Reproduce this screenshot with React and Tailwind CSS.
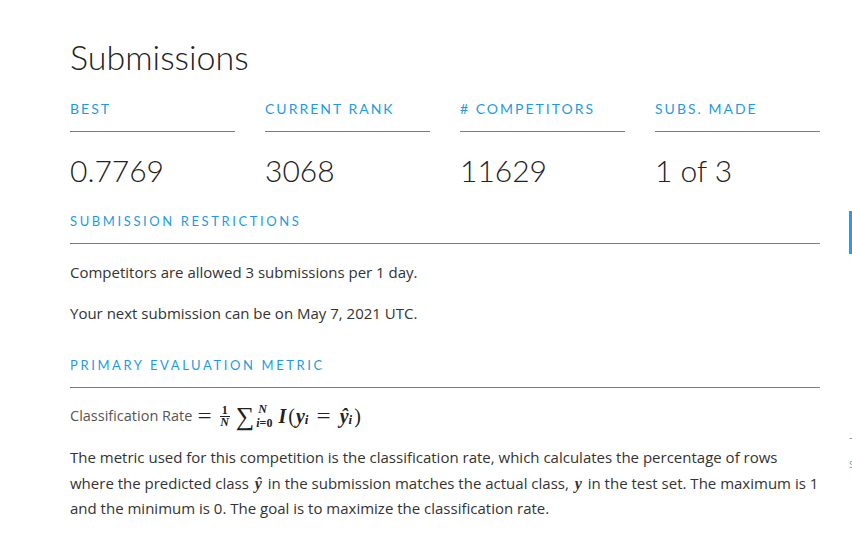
const stats = [
  { label: 'Best', value: '0.7769' },
  { label: 'Current Rank', value: '3068' },
  { label: '# Competitors', value: '11629' },
  { label: 'Subs. Made', value: '1 of 3' },
]

const headFont = { fontFamily: 'Lato, "Noto Sans", sans-serif' }
const mathFont = { fontFamily: '"Liberation Serif", "DejaVu Serif", serif' }

const SectionTitle = ({ children }) => (
  <div className="border-b border-[#1e9be0] pb-[14px]">
    <h3 className="text-[13px] leading-[16px] uppercase tracking-[2.6px] text-[#1e9be0]" style={headFont}>
      {children}
    </h3>
  </div>
)

// formula drawn with plain text, serif italic like the tex render
const Formula = () => (
  <span className="inline-flex items-center text-[20px] leading-[24px] text-[#222] ml-[7px]" style={mathFont}>
    <span className="mr-[7px] scale-x-125">=</span>
    <span className="inline-flex flex-col items-center text-[12px] leading-[11px] font-bold mx-[2px]">
      <span className="border-b border-[#222] px-[2px]">1</span>
      <span className="italic">N</span>
    </span>
    <span className="text-[26px] ml-[4px] mt-[2px]">&sum;</span>
    <span className="inline-flex flex-col text-[12px] leading-[14px] font-bold mr-[6px] ml-[2px] -mt-[1px]">
      <span className="italic ml-[2px]">N</span>
      <span><span className="italic">i</span>=0</span>
    </span>
    <span className="italic font-bold">I</span>
    <span className="ml-[2px]">(</span>
    <span className="italic font-bold ml-[1px]">y</span>
    <span className="italic text-[13px] mt-[8px] font-bold">i</span>
    <span className="mx-[10px] scale-x-125">=</span>
    <span className="italic font-bold">&#375;</span>
    <span className="italic text-[13px] mt-[8px] font-bold">i</span>
    <span className="ml-[2px]">)</span>
  </span>
)

const App = () => {
  return (
    <div className="w-[852px] h-[549px] overflow-hidden bg-white flex">
      <div className="w-[750px] ml-[70px] shrink-0 pt-[37px]">
        <h1 className="text-[34px] leading-[40px] font-light text-[#222]" style={headFont}>
          Submissions
        </h1>

        <div className="grid grid-cols-4 gap-[30px] mt-[19px]">
          {stats.map(s => (
            <div key={s.label}>
              <div className="border-b border-[#1e9be0] pb-[11px]">
                <span className="text-[14px] leading-[17px] uppercase tracking-[2px] text-[#1e9be0]" style={headFont}>
                  {s.label}
                </span>
              </div>
              <p className="text-[30px] leading-[36px] font-light text-[#222] mt-[20px]" style={headFont}>
                {s.value}
              </p>
            </div>
          ))}
        </div>

        <div className="mt-[25px]">
          <SectionTitle>Submission Restrictions</SectionTitle>
        </div>

        <div className="text-[15px] leading-[25px] text-[#333]" style={{ fontFamily: '"Open Sans", sans-serif' }}>
          <p className="mt-[16px]">Competitors are allowed 3 submissions per 1 day.</p>
          <p className="mt-[16px]">Your next submission can be on May 7, 2021 UTC.</p>
        </div>

        <div className="mt-[31px]">
          <SectionTitle>Primary Evaluation Metric</SectionTitle>
        </div>

        <div className="mt-[12px] flex items-center text-[14.5px] text-[#555]" style={{ fontFamily: '"Open Sans", sans-serif' }}>
          Classification Rate <Formula />
        </div>

        <p className="mt-[13px] text-[15px] leading-[25.5px] text-[#333]" style={{ fontFamily: '"Open Sans", sans-serif' }}>
          The metric used for this competition is the classification rate, which calculates the percentage of rows
          where the predicted class <span className="italic font-bold text-[16px] px-[2px]" style={mathFont}>&#375;</span> in the submission matches the actual class, <span className="italic font-bold text-[16px] px-[2px]" style={mathFont}>y</span> in the test set. The maximum is 1
          and the minimum is 0. The goal is to maximize the classification rate.
        </p>
      </div>

      <aside className="ml-[29px] w-[200px] shrink-0 pt-[211px]">
        <div className="h-[43px] border-l-[3px] border-[#1aa3e8]"></div>
        <div className="mt-[171px] text-[12px] leading-[26px] text-[#999]" style={{ fontFamily: '"Open Sans", sans-serif' }}>
          <p>-</p>
          <p>s</p>
        </div>
      </aside>
    </div>
  )
}

export default App
